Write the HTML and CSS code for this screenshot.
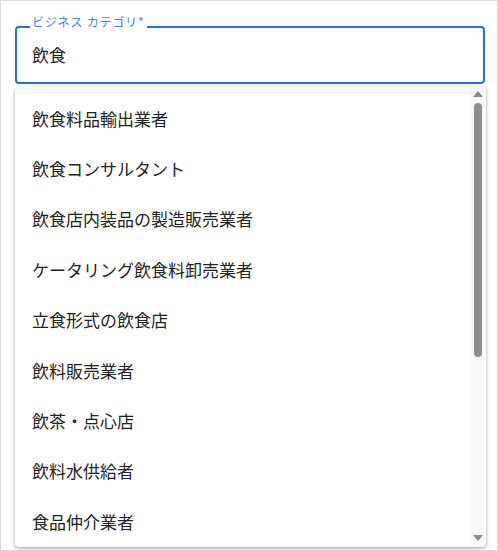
FILE: index.html
```html
<!DOCTYPE html>
<html lang="ja">
<head>
<meta charset="utf-8">
<link rel="stylesheet" href="styles.css">
</head>
<body>
<div class="frame">
  <div class="field">
    <span class="label">ビジネス カテゴリ*</span>
    <div class="value">飲食</div>
  </div>
  <div class="menu">
    <ul class="list">
      <li class="item">飲食料品輸出業者</li>
      <li class="item">飲食コンサルタント</li>
      <li class="item">飲食店内装品の製造販売業者</li>
      <li class="item">ケータリング飲食料卸売業者</li>
      <li class="item">立食形式の飲食店</li>
      <li class="item">飲料販売業者</li>
      <li class="item">飲茶・点心店</li>
      <li class="item">飲料水供給者</li>
      <li class="item">食品仲介業者</li>
    </ul>
    <div class="scrollbar">
      <div class="arrow up"></div>
      <div class="track"><div class="thumb"></div></div>
      <div class="arrow down"></div>
    </div>
  </div>
</div>
</body>
</html>
```
FILE: styles.css
```css
html, body {
  margin: 0;
  padding: 0;
  background: #fff;
}
body {
  font-family: "Noto Sans CJK JP", "Noto Sans", sans-serif;
  color: #202124;
}
.frame {
  width: 498px;
  height: 551px;
  box-sizing: border-box;
  border: 1px solid #dadada;
  padding: 25px 14px 0 14px;
  display: flex;
  flex-direction: column;
}
.field {
  position: relative;
  height: 58px;
  width: 470px;
  box-sizing: border-box;
  border: 2px solid #1a73e8;
  border-radius: 4px;
  padding: 0 15px;
  display: flex;
  align-items: center;
  flex: none;
}
.label {
  position: absolute;
  top: -13px;
  left: 13px;
  padding: 0 3px 0 2px;
  background: #fff;
  font-size: 12px;
  line-height: 14px;
  letter-spacing: 0.8px;
  color: #3b86ea;
}
.value {
  font-size: 17px;
  line-height: 22px;
  color: #222;
}
.menu {
  margin-top: 3px;
  width: 471px;
  height: 460px;
  flex: none;
  background: #fff;
  border-radius: 4px;
  box-shadow: 0 1px 3px rgba(0,0,0,0.3), 0 2px 6px rgba(0,0,0,0.12);
  display: flex;
  overflow: hidden;
}
.list {
  list-style: none;
  margin: 0;
  padding: 6px 0 0 0;
  flex: 1;
}
.item {
  height: 50.4px;
  display: flex;
  align-items: center;
  padding-left: 17px;
  font-size: 17px;
  color: #222;
}
.scrollbar {
  width: 15px;
  margin-right: 1px;
  background: #f9f9f9;
  display: flex;
  flex-direction: column;
  align-items: center;
}
.arrow {
  width: 0;
  height: 0;
  border-left: 5px solid transparent;
  border-right: 5px solid transparent;
}
.arrow.up {
  margin-top: 4px;
  border-bottom: 6px solid #8a8a8a;
}
.arrow.down {
  margin-bottom: 6px;
  border-top: 6px solid #8a8a8a;
}
.track {
  flex: 1;
  width: 100%;
  display: flex;
  justify-content: center;
  padding-top: 6px;
}
.thumb {
  width: 8px;
  height: 254px;
  border-radius: 4px;
  background: #8f8f8f;
}
```
